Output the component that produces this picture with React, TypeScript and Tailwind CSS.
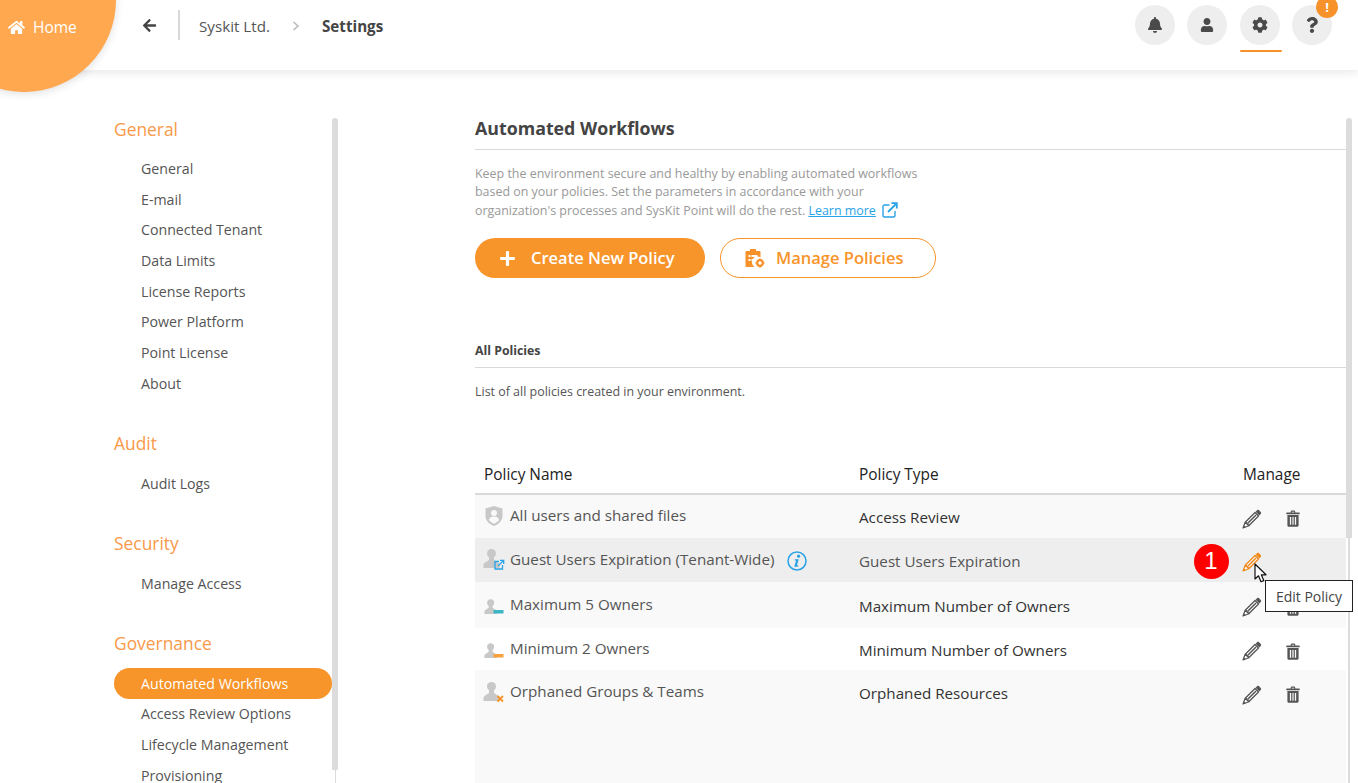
import { FaArrowLeft, FaBell, FaCog, FaHome, FaPlus, FaQuestion, FaUser } from "react-icons/fa";

const font = { fontFamily: '"Open Sans", "Noto Sans", sans-serif' };

const sections = [
  { title: "General", items: ["General", "E-mail", "Connected Tenant", "Data Limits", "License Reports", "Power Platform", "Point License", "About"] },
  { title: "Audit", items: ["Audit Logs"] },
  { title: "Security", items: ["Manage Access"] },
  { title: "Governance", items: ["Automated Workflows", "Access Review Options", "Lifecycle Management", "Provisioning"] },
];

function Pencil({ color = "#555" }: { color?: string }) {
  return (
    <svg width="20" height="20" viewBox="0 0 20 20" fill="none">
      <path d="M3.500 13 13 3.500 16.500 7 7 16.500Z" fill="#fff" fillOpacity="0.6" stroke={color} strokeWidth="1.300" strokeLinejoin="round" />
      <path d="M5.800 14.200 14 6" stroke={color} strokeWidth="1.500" />
      <path d="M13.600 2.700 15 1.300c.6-.6 1.500-.6 2.100 0l1.600 1.600c.6.6.6 1.500 0 2.100l-1.400 1.400Z" fill={color} />
      <path d="M3.200 13.200 1 19l5.800-2.200Z" fill="#fff" fillOpacity="0.6" stroke={color} strokeWidth="1.200" strokeLinejoin="round" />
      <path d="M1 19l.8-2.800 2 2Z" fill={color} />
    </svg>
  );
}

function Trash() {
  return (
    <svg width="14" height="17" viewBox="0 0 16 18" fill="#555" preserveAspectRatio="none">
      <path d="M5.400 2.600V2c0-.9.7-1.400 1.500-1.400h2.200c.8 0 1.500.5 1.500 1.400v.6H15c.4 0 .7.3.7.7v1.200H.3V3.300c0-.4.3-.7.7-.7ZM6.600 2.600h2.800v-.4c0-.2-.1-.4-.4-.4H7c-.3 0-.4.2-.4.4Z" />
      <path fillRule="evenodd" d="M1.600 5.400h12.800v10.800c0 1-.7 1.600-1.600 1.600H3.200c-.9 0-1.600-.6-1.600-1.600ZM4.400 7.400v8.200h1.500V7.400Zm2.900 0v8.200h1.400V7.400Zm2.800 0v8.200h1.500V7.400Z" />
    </svg>
  );
}

// gray person with a small coloured mark in the corner
function Person({ small, children }: { small?: boolean; children: React.ReactNode }) {
  return (
    <svg width="22" height="22" viewBox="0 0 22 22">
      <g transform={small ? "translate(1 5.500) scale(0.78)" : undefined}>
        <circle cx="8.500" cy="5.500" r="4.500" fill="#c8c8c8" />
        <path d="M6 9h5v3l4.500 3c.6.4 1 1 1 1.700V20H.500v-3.300c0-.7.4-1.300 1-1.700L6 12Z" fill="#c8c8c8" />
      </g>
      {children}
    </svg>
  );
}

function Shield() {
  return (
    <svg width="20" height="22" viewBox="0 0 20 22">
      <path d="M10 1 18.500 3.500V11c0 4.500-3.500 8-8.500 10C5 19 1.500 15.500 1.500 11V3.500Z" fill="#c8c8c8" />
      <circle cx="10" cy="8" r="3" fill="#f9f9f9" />
      <path d="M4.800 15c.6-2.400 2.600-3.500 5.200-3.500s4.600 1.100 5.200 3.500c-1.200 1.500-3 2.800-5.200 3.800-2.200-1-4-2.300-5.200-3.800Z" fill="#f9f9f9" />
    </svg>
  );
}

function ClipboardGear() {
  return (
    <svg width="20" height="20" viewBox="0 0 20 20" fill="#f7922a">
      <path d="M1.500 3H5V1h6v2h3.500c.6 0 1 .4 1 1v5.200a5.500 5.500 0 0 0-5.800 9.800H1.500c-.6 0-1-.4-1-1V4c0-.6.4-1 1-1Z" />
      <path d="M3.500 7h2v2h-2ZM6.500 7h6v2h-6ZM3.500 11h2v2h-2ZM6.500 11h3v2h-3Z" fill="#fff" />
      <circle cx="15" cy="15" r="2.800" fill="none" stroke="#f7922a" strokeWidth="2.200" />
      <path d="M14.200 10.500h1.600v1.500h-1.600ZM14.200 18h1.600v1.500h-1.600ZM10.500 14.200H12v1.600h-1.500ZM18 14.200h1.500v1.600H18Z" />
    </svg>
  );
}

function External() {
  return (
    <svg width="16" height="16" viewBox="0 0 16 16" fill="none" stroke="#29a3e8" strokeWidth="1.400">
      <path d="M7.500 3H2.500C1.700 3 1 3.700 1 4.500v9c0 .8.700 1.500 1.500 1.500h9c.8 0 1.500-.7 1.500-1.500V9" />
      <path d="M6 10 14 2" strokeWidth="1.800" />
      <path d="M9.500 1.200h5.300v5.300" strokeWidth="1.800" />
    </svg>
  );
}

function Info() {
  return (
    <svg width="20" height="20" viewBox="0 0 20 20" fill="none">
      <circle cx="10" cy="10" r="9" stroke="#29a3e8" strokeWidth="1.500" />
      <circle cx="11.600" cy="5.200" r="1.600" fill="#29a3e8" />
      <path d="M7.900 8.200h3.900l-1.900 6.400h1.500l-.3 1.200H7.200l1.900-6.400H7.600Z" fill="#29a3e8" />
    </svg>
  );
}

const rows = [
  {
    name: "All users and shared files", type: "Access Review", h: "h-[43px]", bg: "bg-[#f9f9f9]",
    icon: <Shield />,
  },
  {
    name: "Guest Users Expiration (Tenant-Wide)", type: "Guest Users Expiration", h: "h-[44px]", bg: "bg-[#eeeeee]", active: true,
    icon: (
      <Person>
        <g fill="none" stroke="#29a3e8" strokeWidth="1.300">
          <path d="M16 13.500h-4v7.500h7.500v-4" />
          <path d="M15 18 20.500 12.500M17 12.300h3.700V16" />
        </g>
      </Person>
    ),
  },
  {
    name: "Maximum 5 Owners", type: "Maximum Number of Owners", h: "h-[46px]", bg: "bg-[#f9f9f9]",
    icon: (
      <Person small>
        <rect x="10.500" y="17" width="10" height="3.500" fill="#3bb5c4" />
      </Person>
    ),
  },
  {
    name: "Minimum 2 Owners", type: "Minimum Number of Owners", h: "h-[42px]", bg: "bg-white",
    icon: (
      <Person small>
        <rect x="10.500" y="17" width="10" height="3.500" fill="#f7a13c" />
      </Person>
    ),
  },
  {
    name: "Orphaned Groups & Teams", type: "Orphaned Resources", h: "h-[45px]", bg: "bg-[#f9f9f9]",
    icon: (
      <Person>
        <path d="M14.500 15 20 20.500M20 15 14.500 20.500" stroke="#f7922a" strokeWidth="1.800" />
      </Person>
    ),
  },
];

export default function App() {
  return (
    <div className="relative h-[783px] w-[1358px] overflow-hidden bg-white text-[#555]" style={font}>
      <div className="absolute -left-[68px] -top-[92px] z-20 h-[184px] w-[184px] rounded-full bg-[#ffa850] shadow-[0_2px_8px_rgba(0,0,0,0.12)]" />
      <div className="absolute left-[8px] top-[16px] z-20 flex items-center gap-[8px] text-[15.500px] text-white">
        <FaHome size={17} />
        <span>Home</span>
      </div>

      <header className="flex h-[70px] items-start bg-white shadow-[0_2px_10px_rgba(0,0,0,0.1)]">
        <div className="flex h-[50px] items-center pl-[142px] text-[15.200px]">
          <FaArrowLeft size={15} className="text-[#444]" />
          <div className="ml-[21px] h-[30px] w-[2px] bg-[#d8d8d8]" />
          <span className="ml-[19px] pt-[2px]">Syskit Ltd.</span>
          <svg className="ml-[22px] mt-[2px]" width="8" height="10" viewBox="0 0 8 10" fill="none" stroke="#bbb" strokeWidth="1.600">
            <path d="M1.500 1 6 5 1.500 9" />
          </svg>
          <span className="ml-[22px] pt-[3px] font-bold text-[#444]">Settings</span>
        </div>
        <div className="ml-auto mr-[26px] mt-[5px] flex gap-[12.300px]">
          {[FaBell, FaUser, FaCog, FaQuestion].map((Icon, i) => (
            <div key={i} className="relative flex h-[40px] w-[40px] items-center justify-center rounded-full bg-[#eeeeee]">
              <Icon size={i === 1 ? 14 : 16} className="text-[#4a4a4a]" />
              {i === 2 && <div className="absolute -bottom-[7px] left-0 h-[2px] w-[42px] rounded bg-[#f7922a]" />}
              {i === 3 && (
                <div className="absolute -right-[6px] -top-[9px] flex h-[22px] w-[22px] items-center justify-center rounded-full bg-[#f7922a] text-[13px] font-bold leading-none text-white">
                  !
                </div>
              )}
            </div>
          ))}
        </div>
      </header>

      <div className="flex h-[713px]">
        <aside className="relative ml-[114px] mt-[47.700px] w-[224px] shrink-0 pr-[6px]">
          {sections.map((s) => (
            <div key={s.title} className="mb-[33.700px]">
              <div className="mb-[11.600px] h-[24px] text-[17.400px] leading-[23px] text-[#f9994a]">{s.title}</div>
              {s.items.map((item) =>
                item === "Automated Workflows" ? (
                  <div key={item} className="flex h-[30.700px] items-center rounded-full bg-[#f7942a] pl-[27px] text-[14.200px] text-white">
                    {item}
                  </div>
                ) : (
                  <div key={item} className="flex h-[30.700px] items-center pl-[27px] text-[14.200px]">
                    {item}
                  </div>
                ),
              )}
            </div>
          ))}
          <div className="absolute right-[2.500px] top-0 h-[700px] w-px bg-[#dcdcdc]" />
          <div className="absolute right-0 top-0 h-[652px] w-[6px] rounded-t-full bg-[#dcdcdc]" />
        </aside>

        <main className="relative ml-[137px] mt-[46px] w-[877px] pr-[6px]">
          <h1 className="text-[17.800px] font-bold leading-[24px] text-[#444]">Automated Workflows</h1>
          <div className="mt-[9px] h-px bg-[#d9d9d9]" />
          <p className="mt-[15px] w-[460px] text-[12.450px] leading-[18.400px] text-[#999]">
            Keep the environment secure and healthy by enabling automated workflows based on your policies. Set the parameters in accordance with your organization's processes and SysKit Point will do the rest.{" "}
            <span className="text-[#29a3e8] underline">Learn more</span>
            <span className="ml-[6px] inline-block align-[-3px]">
              <External />
            </span>
          </p>

          <div className="mt-[18px] flex gap-[15px]">
            <button className="flex h-[40px] w-[230px] items-center rounded-full bg-[#f7942a] pl-[24px] text-[16.500px] font-semibold text-white">
              <FaPlus size={17} />
              <span className="ml-[15px] pt-[1px]">Create New Policy</span>
            </button>
            <button className="flex h-[40px] w-[216px] items-center rounded-full border border-[#f7942a] pl-[24px] text-[16.500px] font-semibold text-[#f7942a]">
              <ClipboardGear />
              <span className="ml-[11px] pt-[1px]">Manage Policies</span>
            </button>
          </div>

          <div className="mt-[64px] text-[12.300px] font-bold leading-[18px] text-[#444]">All Policies</div>
          <div className="mt-[7px] h-px bg-[#d9d9d9]" />
          <p className="mt-[15px] text-[12.450px] leading-[18px] text-[#555]">List of all policies created in your environment.</p>

          <div className="mt-[55px] grid h-[36px] grid-cols-[375px_384px_1fr] items-center pl-[9px] text-[15.400px] text-[#222]">
            <span>Policy Name</span>
            <span>Policy Type</span>
            <span>Manage</span>
          </div>
          <div className="mt-[1px] h-[2px] bg-[#d9d9d9]" />

          <div className="h-[300px] bg-[#f9f9f9]">
            {rows.map((r) => (
              <div key={r.name} className={`relative grid grid-cols-[375px_384px_1fr] items-center pl-[9px] text-[15.200px] ${r.h} ${r.bg}`}>
                <div className="-ml-[2px] -mt-[2px] flex items-center gap-[5px]">
                  <span className="flex w-[23px] justify-center">{r.icon}</span>
                  <span>{r.name}</span>
                  {r.active && (
                    <span className="ml-[8px] mt-[3px]">
                      <Info />
                    </span>
                  )}
                </div>
                <span className={r.active ? "pt-[2px] text-[#555]" : "pt-[2px] text-[#333]"}>{r.type}</span>
                <div className="-ml-[1px] flex items-center pt-[4px]">
                  <Pencil color={r.active ? "#f08a1d" : "#555"} />
                  {!r.active && (
                    <span className="ml-[24px]">
                      <Trash />
                    </span>
                  )}
                </div>
                {r.active && (
                  <div
                    className="absolute left-[718.500px] top-[5.500px] flex h-[35px] w-[35px] items-center justify-center rounded-full bg-[#fe0000] text-[24px] text-white"
                    style={{ fontFamily: '"Liberation Sans", sans-serif' }}
                  >
                    1
                  </div>
                )}
              </div>
            ))}
          </div>

          <div className="absolute left-[871px] top-[2px] h-[700px] w-[6px]">
            <div className="mx-auto h-full w-[2px] bg-[#dcdcdc]" />
            <div className="absolute left-0 top-0 h-[420px] w-[6px] rounded-t-full bg-[#dcdcdc]" />
          </div>

          <svg className="absolute left-[779px] top-[447px] z-10" width="15" height="21" viewBox="0 0 15 21">
            <path d="M1 1v15l3.500-3.200 2.500 6 2.800-1.200-2.500-5.800H12Z" fill="#fff" stroke="#111" strokeWidth="1.200" strokeLinejoin="round" />
          </svg>
          <div className="absolute left-[790px] top-[464px] z-10 flex h-[32px] w-[88px] items-center justify-center border border-[#222] bg-white text-[14px] text-[#444]">
            Edit Policy
          </div>
        </main>
      </div>
    </div>
  );
}
